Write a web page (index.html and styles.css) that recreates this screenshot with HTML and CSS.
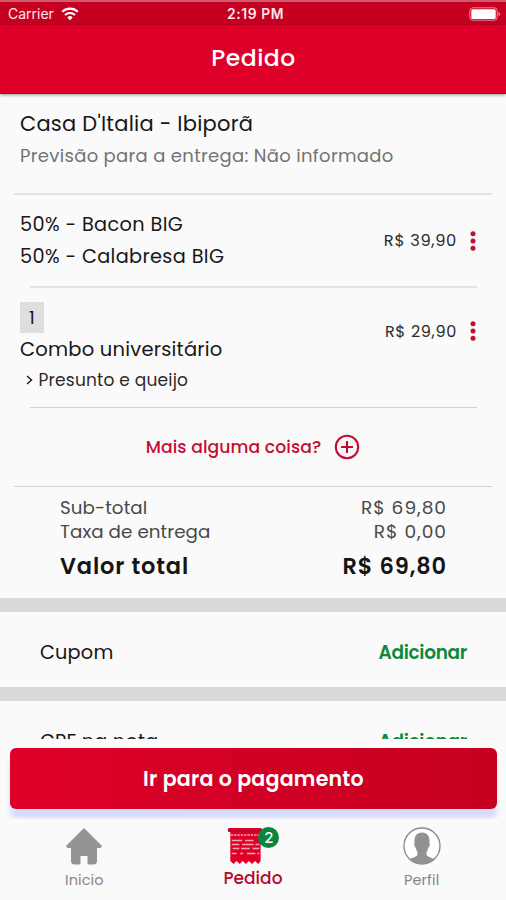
FILE: index.html
```html
<!DOCTYPE html>
<html lang="pt-BR">
<head>
<meta charset="utf-8">
<title>Pedido</title>
<link rel="stylesheet" href="styles.css">
</head>
<body>
<div class="status">
  <div class="carrier"><span>Carrier</span>
    <svg width="18" height="14" viewBox="0 0 18 14" fill="none" stroke="#fff" stroke-width="2.1"><path d="M1.2 4.8a11.2 11.2 0 0 1 15.6 0M4 8a7.2 7.2 0 0 1 10 0"/><path d="M9 13.2 6.3 10.4a3.9 3.9 0 0 1 5.4 0Z" fill="#fff" stroke="none"/></svg>
  </div>
  <div class="clock">2:19 PM</div>
  <div class="power"><svg width="32" height="14" viewBox="0 0 32 14"><rect x=".8" y=".8" width="27.4" height="12.4" rx="3" fill="none" stroke="#e8889a"/><rect x="2.3" y="2.3" width="24.4" height="9.6" rx="1.5" fill="#fff"/><path d="M29.5 5v4q1.8-.6 1.8-2t-1.8-2Z" fill="#e8889a"/></svg></div>
</div>
<header class="topbar"><h1>Pedido</h1></header>
<main class="content">
  <section class="store">
    <h2>Casa D'Italia - Ibiporã</h2>
    <p>Previsão para a entrega: Não informado</p>
  </section>
  <hr class="rule wide">
  <section class="item first">
    <div class="desc"><p class="line">50% - Bacon BIG</p><p class="line">50% - Calabresa BIG</p></div>
    <span class="price">R$ 39,90</span>
    <svg class="dots" width="6" height="20" viewBox="0 0 6 20"><circle cx="3" cy="2.7" r="2.5"/><circle cx="3" cy="10" r="2.5"/><circle cx="3" cy="17.3" r="2.5"/></svg>
  </section>
  <hr class="rule inner">
  <section class="item second">
    <div class="desc"><span class="qty">1</span><p class="combo">Combo universitário</p><p class="extra"><svg width="7" height="10" viewBox="0 0 7 10"><path d="m1 1 4.500 4L1 9" fill="none" stroke="#222" stroke-width="1.5"/></svg><span>Presunto e queijo</span></p></div>
    <span class="price">R$ 29,90</span>
    <svg class="dots" width="6" height="20" viewBox="0 0 6 20"><circle cx="3" cy="2.7" r="2.5"/><circle cx="3" cy="10" r="2.5"/><circle cx="3" cy="17.3" r="2.5"/></svg>
  </section>
  <hr class="rule inner thin">
  <div class="more"><span>Mais alguma coisa?</span><svg width="26" height="26" viewBox="0 0 26 26" fill="none" stroke="#c40c30" stroke-width="2.1"><circle cx="13" cy="13" r="11.2"/><path d="M7 13h12M13 7v12"/></svg></div>
  <hr class="rule wide thin">
  <section class="totals">
    <div class="row"><span>Sub-total</span><span class="amount">R$ 69,80</span></div>
    <div class="row"><span>Taxa de entrega</span><span class="amount">R$ 0,00</span></div>
    <div class="row grand"><span>Valor total</span><span>R$ 69,80</span></div>
  </section>
  <section class="option"><span>Cupom</span><b>Adicionar</b></section>
  <section class="option"><span>CPF na nota</span><b>Adicionar</b></section>
</main>
<div class="pay"><button><span>Ir para o pagamento</span></button></div>
<nav class="tabs">
  <div class="tab home">
    <svg width="38" height="38" viewBox="0 0 38 38"><path d="M19 1.5 36 18.5Q37 20.5 34.5 20.5H31.5V34.5Q31.5 37 29 37H23V28.5H15V37H9Q6.500 37 6.500 34.500V20.500H3.500Q1 20.500 2 18.500Z" fill="#949494" stroke="#949494" stroke-linejoin="round"/></svg>
    <span>Inicio</span>
  </div>
  <div class="tab order">
    <div class="ticket">
      <svg width="36" height="38" viewBox="0 0 38 38" preserveAspectRatio="none"><path d="M2 1H36Q38 2 37 5H35.500V34L33 37 29.500 34 26.500 37 23 34 20 37 16.500 34 13.500 37 10 34 7 37 3.500 34V5H1.500Q0 2 2 1Z" fill="#df0029"/><path d="M1 3.600H37" stroke="#b80426" stroke-width="1.300"/><g stroke="#f4a6b3" stroke-width="1.400"><path d="M4 8h31" stroke-dasharray="2.500 1"/><path d="M5 13.500h11m3 0h9M5 17.500h8m3 0h12m2 0h4M6 21.500h7m2 0h9m3 0h7M5 26.500h5m4 0h3m4 0h9m2 0h2"/></g></svg>
      <i class="badge">2</i>
    </div>
    <span>Pedido</span>
  </div>
  <div class="tab profile">
    <svg width="38" height="38" viewBox="0 0 38 38"><circle cx="19" cy="19" r="18" fill="#fff" stroke="#888" stroke-width="1.300"/><path d="M19 5.500C13 5.500 11 10 11.500 16Q10.500 18 12.500 20.500L14.500 25.500V28Q13 30 6.500 32A18 18 0 0 0 31.500 32Q25 30 23.500 28V25.500L25.500 20.500Q27.500 18 26.500 16C27 10 25 5.500 19 5.500Z" fill="#929292"/></svg>
    <span>Perfil</span>
  </div>
</nav>
</body>
</html>
```
FILE: styles.css
```css
* { box-sizing: border-box; margin: 0; padding: 0; }
body { width: 506px; height: 900px; overflow: hidden; display: flex; flex-direction: column; background: #fafafa; color: #171717; font-family: Poppins, Inter, sans-serif; }
svg { display: block; flex: none; }
.status { height: 25px; flex: none; display: grid; grid-template-columns: 1fr auto 1fr; align-items: center; padding: 0 5px 0 8px; background: #c60021; border-top: 2px solid #d05b70; color: #fde9ec; font-family: Inter, sans-serif; }
.carrier { display: flex; align-items: center; gap: 7px; font-size: 14px; }
.clock { font-size: 13.800px; font-weight: 600; letter-spacing: .6px; padding-left: 2px; }
.power { display: flex; justify-content: flex-end; }
.topbar { height: 69px; flex: none; background: #df0029; display: flex; justify-content: center; align-items: center; padding: 0 0 2px 1px; border-bottom: 1px solid #b60022; box-shadow: 0 1px 3px #0006; z-index: 1; }
.topbar h1 { color: #fff; font-size: 23.500px; line-height: 30px; font-weight: 500; letter-spacing: .5px; }
.content { height: 645px; flex: none; overflow: hidden; }
.store { height: 99px; padding: 14px 20px 0; }
.store h2 { font-size: 21px; font-weight: 400; line-height: 32px; letter-spacing: .23px; white-space: nowrap; }
.store p { font-size: 18px; line-height: 32px; letter-spacing: .32px; color: #737373; white-space: nowrap; }
.rule { border: 0; height: 2px; background: #e3e3e3; }
.wide { margin: 0 14px; }
.inner { margin: 0 29px 0 30px; }
.thin { height: 1px; background: #d2d2d2; }
.item { display: flex; align-items: center; padding: 0 30px 0 20px; }
.first { height: 91px; }
.second { height: 119px; }
.desc { flex: 1; }
.line { font-size: 19.300px; line-height: 32px; letter-spacing: .36px; }
.price { font-size: 16.300px; letter-spacing: .65px; margin-right: 13px; color: #2c2c2c; }
.second .price, .second .dots { margin-top: -33px; }
.second .price { font-size: 16.100px; }
.dots { fill: #c3102f; }
.qty { display: block; width: 24px; height: 31px; background: #dfdfdf; font-size: 18px; line-height: 31px; text-align: center; }
.combo { font-size: 19.500px; line-height: 33px; letter-spacing: .22px; }
.extra { display: flex; align-items: center; gap: 5.500px; padding-left: 6px; font-size: 17px; line-height: 28px; letter-spacing: .2px; color: #2a2a2a; }
.more { height: 78px; display: flex; align-items: center; justify-content: center; gap: 13px; color: #c40c30; font-size: 17.200px; font-weight: 500; letter-spacing: .1px; }
.totals { height: 111px; padding: 9px 59px 0 60px; }
.row { display: flex; justify-content: space-between; font-size: 18.300px; line-height: 24px; letter-spacing: .07px; color: #484848; }
.amount { font-size: 18.600px; letter-spacing: .95px; }
.grand { font-size: 22.500px; font-weight: 600; line-height: 44px; letter-spacing: .85px; color: #151515; }
.option { display: flex; align-items: center; justify-content: space-between; border-top: 14px solid #dadada; height: 89px; padding: 5px 39px 0 40px; font-size: 19.300px; letter-spacing: .2px; }
.option b { color: #0c893b; font-weight: 600; font-size: 18.500px; letter-spacing: -.3px; }
.pay { height: 80px; flex: none; padding: 9px 9px 0 10px; }
.pay button { display: block; width: 100%; height: 61px; border: 0; border-radius: 6px; color: #fff; background: linear-gradient(90deg, #df0029, #c60021); box-shadow: 0 9px 5px #d5dcf8; font-family: inherit; font-size: 20.600px; font-weight: 600; letter-spacing: .2px; padding-bottom: 1px; }
.tabs { flex: 1; display: grid; grid-template-columns: repeat(3, 1fr); background: #fafafa; z-index: 1; padding-top: 8px; }
.tab { display: flex; flex-direction: column; align-items: center; color: #858585; font-size: 14.500px; line-height: 30px; letter-spacing: .1px; }
.order { color: #b9082d; font-size: 17px; font-weight: 500; line-height: 26px; letter-spacing: 0; }
.ticket { position: relative; margin-right: 15px; }
.badge { position: absolute; left: 31px; top: 0; width: 21px; height: 21px; border-radius: 50%; background: #07873c; color: #fff; font: 500 15px/21px Inter, sans-serif; letter-spacing: 0; text-align: center; }
```
